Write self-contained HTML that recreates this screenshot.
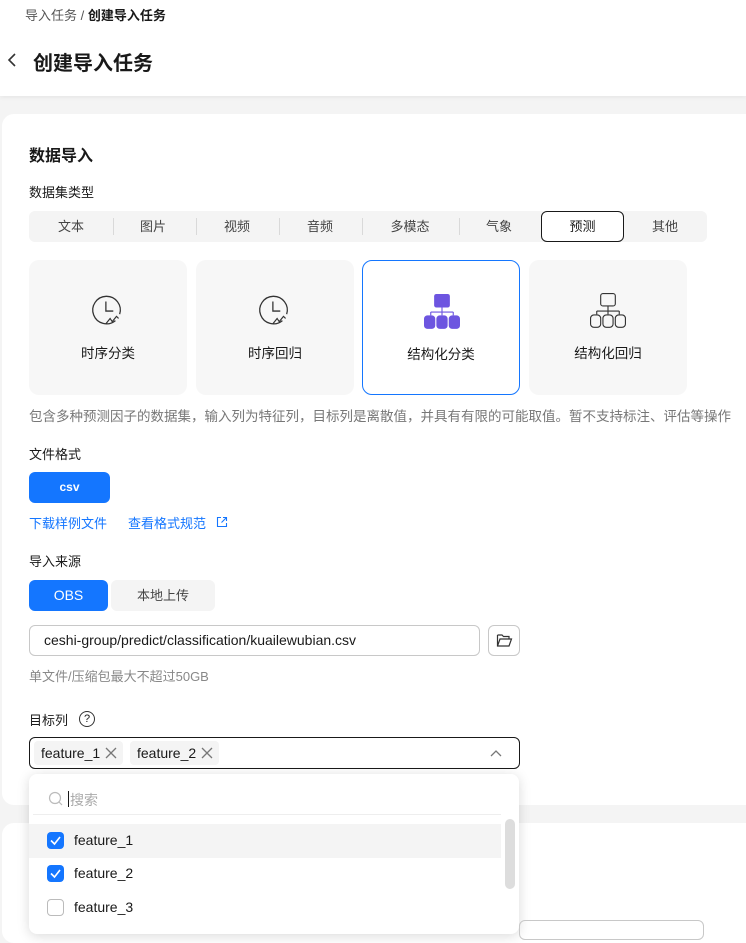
<!DOCTYPE html>
<html><head><meta charset="utf-8"><style>
*{box-sizing:border-box;margin:0;padding:0}
body{width:746px;height:923px;overflow:hidden;background:#f4f4f4;font-family:"Liberation Sans","Noto Sans CJK SC",sans-serif;color:#191919;position:relative;font-size:14px}
.a{position:absolute}
.hdr{left:0;top:0;width:746px;height:96px;background:#fff;box-shadow:0 2px 4px rgba(0,0,0,.05)}
.card{background:#fff;border-radius:12px}
.lbl{font-size:13px;color:#191919}
.tab{top:211px;height:31px;line-height:31px;font-size:13px;color:#444;text-align:center}
.div{top:218px;width:1px;height:17px;background:#d9d9d9}
.tc{top:260px;width:158px;height:135px;background:#f7f7f7;border-radius:10px;text-align:center}
.tc span{position:absolute;left:0;right:0;top:82px;font-size:13.5px}
.cb{width:17px;height:17px;border-radius:4px}
.on{background:#1476ff}
.off{border:1px solid #bbb;background:#fff}
.it{left:74px;font-size:14px;color:#191919}
</style></head><body>
<div class="a hdr"></div>
<div class="a" style="left:25px;top:5px;font-size:13px;color:#555">导入任务 / <span style="color:#191919;font-weight:bold">创建导入任务</span></div>
<svg class="a" style="left:6px;top:52px" width="12" height="16"><path d="M9 2 L3 8 L9 14" stroke="#333" stroke-width="1.6" fill="none"/></svg>
<div class="a" style="left:33px;top:47px;font-size:20px;font-weight:bold;color:#191919">创建导入任务</div>

<div class="a card" style="left:2px;top:114px;width:760px;height:691px"></div>
<div class="a card" style="left:2px;top:823px;width:760px;height:120px"></div>

<div class="a" style="left:29px;top:142px;font-size:16px;font-weight:bold">数据导入</div>
<div class="a lbl" style="left:29px;top:182px">数据集类型</div>
<div class="a" style="left:29px;top:211px;width:678px;height:31px;background:#f4f4f4;border-radius:6px"></div>
<div class="a tab" style="left:41px;width:60px">文本</div>
<div class="a div" style="left:113px"></div>
<div class="a tab" style="left:123px;width:60px">图片</div>
<div class="a div" style="left:196px"></div>
<div class="a tab" style="left:207px;width:60px">视频</div>
<div class="a div" style="left:279px"></div>
<div class="a tab" style="left:290px;width:60px">音频</div>
<div class="a div" style="left:362px"></div>
<div class="a tab" style="left:375px;width:70px">多模态</div>
<div class="a div" style="left:459px"></div>
<div class="a tab" style="left:469px;width:60px">气象</div>
<div class="a tab" style="left:541px;width:83px;background:#fff;border:1px solid #191919;border-radius:6px;line-height:29px;color:#191919">预测</div>
<div class="a tab" style="left:635px;width:60px">其他</div>

<div class="a tc" style="left:29px"><svg class="a" style="left:61px;top:31px" width="36" height="38" viewBox="0 0 34 34"><path d="M24 27 A13 13 0 1 1 28 21" stroke="#333" stroke-width="1.2" fill="none"/><path d="M15 9 V18 H22" stroke="#333" stroke-width="1.2" fill="none"/><path d="M15 30 L19 25 L21 28 L25 23 L27 25" stroke="#333" stroke-width="1.1" fill="none"/></svg><span>时序分类</span></div>
<div class="a tc" style="left:196px"><svg class="a" style="left:61px;top:31px" width="36" height="38" viewBox="0 0 34 34"><path d="M24 27 A13 13 0 1 1 28 21" stroke="#333" stroke-width="1.2" fill="none"/><path d="M15 9 V18 H22" stroke="#333" stroke-width="1.2" fill="none"/><path d="M15 30 L19 25 L21 28 L25 23 L27 25" stroke="#333" stroke-width="1.1" fill="none"/></svg><span>时序回归</span></div>
<div class="a tc" style="left:362px;background:#fff;border:1px solid #1476ff"><svg class="a" style="left:61px;top:33px" width="36" height="36" viewBox="0 0 32 32"><rect x="9" y="0" width="14" height="12" rx="2" fill="#6d55e0"/><path d="M16 12 V16 M6 16 H26 M6 16 V19 M16 16 V19 M26 16 V19" stroke="#6d55e0" stroke-width="1"/><rect x="0" y="19" width="10" height="12" rx="3" fill="#6d55e0"/><rect x="11" y="19" width="10" height="12" rx="3" fill="#6d55e0"/><rect x="22" y="19" width="10" height="12" rx="3" fill="#6d55e0"/></svg><span>结构化分类</span></div>
<div class="a tc" style="left:529px"><svg class="a" style="left:61px;top:33px" width="36" height="36" viewBox="0 0 32 32"><rect x="9.5" y="0.5" width="13" height="11" rx="2" fill="none" stroke="#333"/><path d="M16 12 V16 M6 16 H26 M6 16 V19 M16 16 V19 M26 16 V19" stroke="#333" stroke-width="1"/><rect x="0.5" y="19.5" width="9" height="11" rx="3" fill="none" stroke="#333"/><rect x="11.5" y="19.5" width="9" height="11" rx="3" fill="none" stroke="#333"/><rect x="22.5" y="19.5" width="9" height="11" rx="3" fill="none" stroke="#333"/></svg><span>结构化回归</span></div>
<div class="a" style="left:29px;top:405px;font-size:13.5px;color:#777;white-space:nowrap">包含多种预测因子的数据集，输入列为特征列，目标列是离散值，并具有有限的可能取值。暂不支持标注、评估等操作</div>

<div class="a lbl" style="left:29px;top:444px">文件格式</div>
<div class="a" style="left:29px;top:472px;width:81px;height:31px;background:#1476ff;border-radius:6px;color:#fff;font-size:12px;font-weight:bold;text-align:center;line-height:31px">csv</div>
<div class="a" style="left:29px;top:513px;font-size:13px;color:#1476ff">下载样例文件</div>
<div class="a" style="left:128px;top:513px;font-size:13px;color:#1476ff">查看格式规范</div>
<svg class="a" style="left:215px;top:515px" width="14" height="14"><path d="M6 2.5 H2.5 V11.5 H11.5 V8 M8 2.5 H11.5 V6 M11.5 2.5 L6.5 7.5" stroke="#1476ff" stroke-width="1.1" fill="none"/></svg>

<div class="a lbl" style="left:29px;top:551px">导入来源</div>
<div class="a" style="left:29px;top:580px;width:79px;height:31px;background:#1476ff;border-radius:6px;color:#fff;font-size:14px;text-align:center;line-height:31px">OBS</div>
<div class="a" style="left:111px;top:580px;width:104px;height:31px;background:#f4f4f4;border-radius:6px;color:#444;font-size:13px;text-align:center;line-height:31px">本地上传</div>
<div class="a" style="left:29px;top:625px;width:451px;height:31px;border:1px solid #c8c8c8;border-radius:6px;padding-left:14px;line-height:29px;font-size:14px">ceshi-group/predict/classification/kuailewubian.csv</div>
<div class="a" style="left:488px;top:625px;width:32px;height:31px;border:1px solid #c8c8c8;border-radius:6px"></div>
<svg class="a" style="left:496px;top:633px" width="17" height="15"><path d="M1.5 2 H6 L7.5 3.5 H13 V6 M1.5 2 V13 H13 L15.5 6 H4 L1.5 13" stroke="#333" stroke-width="1.2" fill="none"/></svg>
<div class="a" style="left:29px;top:666px;font-size:13px;color:#888">单文件/压缩包最大不超过50GB</div>

<div class="a lbl" style="left:29px;top:710px">目标列</div>
<div class="a" style="left:79px;top:711px;width:16px;height:16px;border:1.2px solid #333;border-radius:50%;font-size:11px;text-align:center;line-height:14px">?</div>
<div class="a" style="left:29px;top:737px;width:491px;height:32px;border:1px solid #191919;border-radius:6px"></div>
<div class="a" style="left:34px;top:741px;width:89px;height:24px;background:#f4f4f4;border-radius:4px;padding-left:7px;line-height:24px;font-size:14px">feature_1</div>
<div class="a" style="left:130px;top:741px;width:89px;height:24px;background:#f4f4f4;border-radius:4px;padding-left:7px;line-height:24px;font-size:14px">feature_2</div>
<svg class="a" style="left:104px;top:746px" width="14" height="14"><path d="M2 2 L12 12 M12 2 L2 12" stroke="#777" stroke-width="1.3"/></svg>
<svg class="a" style="left:200px;top:746px" width="14" height="14"><path d="M2 2 L12 12 M12 2 L2 12" stroke="#777" stroke-width="1.3"/></svg>
<svg class="a" style="left:489px;top:748px" width="14" height="10"><path d="M2 8 L7 3 L12 8" stroke="#777" stroke-width="1.3" fill="none"/></svg>

<div class="a" style="left:29px;top:774px;width:490px;height:160px;background:#fff;border-radius:8px;box-shadow:0 2px 12px rgba(0,0,0,.15)"></div>
<svg class="a" style="left:48px;top:791px" width="16" height="16"><circle cx="7" cy="7" r="5.5" stroke="#bbb" stroke-width="1.2" fill="none"/><path d="M11 11 L14 14" stroke="#bbb" stroke-width="1.2"/></svg>
<div class="a" style="left:68px;top:791px;width:1px;height:16px;background:#191919"></div>
<div class="a" style="left:70px;top:790px;font-size:14px;color:#aaa">搜索</div>
<div class="a" style="left:33px;top:814px;width:468px;height:1px;background:#eee"></div>
<div class="a" style="left:29px;top:824px;width:472px;height:34px;background:#f4f4f4"></div>
<div class="a" style="left:505px;top:819px;width:10px;height:70px;background:#ddd;border-radius:5px"></div>
<div class="a cb on" style="left:47px;top:832px"></div>
<svg class="a" style="left:47px;top:832px" width="17" height="17"><path d="M4 8.5 L7.5 12 L13 5" stroke="#fff" stroke-width="1.6" fill="none"/></svg>
<div class="a it" style="top:832px">feature_1</div>
<div class="a cb on" style="left:47px;top:865px"></div>
<svg class="a" style="left:47px;top:865px" width="17" height="17"><path d="M4 8.5 L7.5 12 L13 5" stroke="#fff" stroke-width="1.6" fill="none"/></svg>
<div class="a it" style="top:865px">feature_2</div>
<div class="a cb off" style="left:47px;top:899px"></div>
<div class="a it" style="top:899px">feature_3</div>
<div class="a" style="left:519px;top:920px;width:185px;height:20px;border:1px solid #c8c8c8;border-radius:6px"></div>
</body></html>
